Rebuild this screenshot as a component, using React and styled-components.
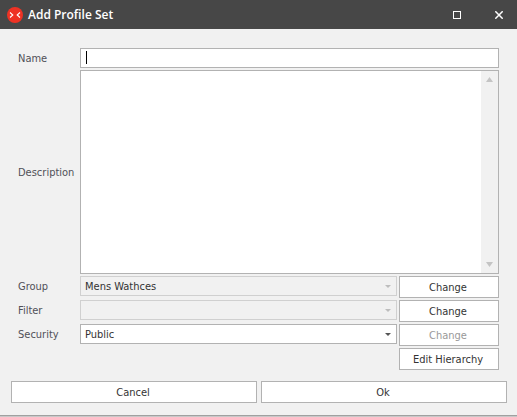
import React, { useState } from "react";
import styled, { createGlobalStyle } from "styled-components";

const GlobalStyle = createGlobalStyle`
  *, *::before, *::after { box-sizing: border-box; }
  body { margin: 0; background: #f1f1f1; }
  body, button, input, select, textarea {
    font-family: "DejaVu Sans Condensed", "DejaVu Sans", sans-serif;
    font-size: 11px;
    line-height: 16px;
    color: #333;
  }
`;

const Dialog = styled.form`
  display: flex;
  flex-direction: column;
  min-height: 100vh;
  background: #f1f1f1;
  border-bottom: 1px solid #c8c8c8;
  box-shadow: inset 0 -1px 0 #a0a0a0;
`;

const TitleBar = styled.header`
  display: flex;
  align-items: center;
  height: 29px;
  padding: 0 12px 0 7px;
  background: #474747;
  color: #fff;
`;

const Title = styled.h1`
  flex: 1;
  margin: 0 0 0 5px;
  font-family: "Open Sans", "Noto Sans", sans-serif;
  font-size: 12px;
  line-height: 16px;
  font-weight: 600;
`;

const WindowControls = styled.div`
  display: flex;
  gap: 30px;
`;

const WindowButton = styled.button`
  display: flex;
  align-items: center;
  justify-content: center;
  width: 12px;
  height: 16px;
  padding: 0;
  border: 0;
  background: none;
`;

const Fields = styled.div`
  flex: 1;
  display: grid;
  grid-template-columns: 60px minmax(0, 1fr) 100px;
  grid-template-rows: 20px minmax(80px, 1fr) repeat(4, 22px);
  gap: 2px;
  padding: 19px 18px 11px;
`;

const Label = styled.label`
  align-self: ${(p) => (p.$middle ? "center" : "start")};
  padding: 3px 0 1px;
  color: #505058;
`;

const NameField = styled.div`
  position: relative;
  grid-column: 2 / 4;
`;

const TextInput = styled.input`
  display: block;
  width: 100%;
  height: 20px;
  padding: 2px 4px 0;
  border: 1px solid #b2b2b2;
  border-radius: 0;
  background: #fff;
  outline: none;
  caret-color: transparent;
`;

const Caret = styled.span`
  position: absolute;
  top: 3px;
  left: 6px;
  width: 1px;
  height: 13px;
  background: #000;
  pointer-events: none;
`;

const DescriptionField = styled.div`
  grid-column: 2 / 4;
  display: flex;
  border: 1px solid #b2b2b2;
  background: #fff;
`;

const TextArea = styled.textarea`
  flex: 1;
  min-width: 0;
  padding: 2px 4px;
  border: 0;
  background: none;
  outline: none;
  resize: none;
  overflow: hidden;
`;

const ScrollTrack = styled.div`
  display: flex;
  flex-direction: column;
  justify-content: space-between;
  align-items: center;
  width: 17px;
  padding: 6px 0;
  background: #f1f1f1;
`;

const SelectField = styled.div`
  position: relative;
  color: ${(p) => (p.$disabled ? "#bdbdbd" : "#555")};
`;

const Select = styled.select`
  display: block;
  width: 100%;
  height: 20px;
  padding: 2px 20px 0 4px;
  appearance: none;
  border: 1px solid #b2b2b2;
  border-radius: 0;
  background: #fff;
  outline: none;
  &:disabled {
    border-color: #d0d0d0;
    background: #f1f1f1;
    color: #333;
    opacity: 1;
  }
`;

const DropArrow = styled.svg`
  position: absolute;
  top: 9px;
  right: 6px;
  pointer-events: none;
`;

const Button = styled.button`
  height: 22px;
  padding: 2px 2px 0 0;
  border: 1px solid #b2b2b2;
  border-radius: 0;
  background: #fff;
  &:disabled { color: #999; }
`;

const HierarchyButton = styled(Button)`
  grid-column: 3;
`;

const Footer = styled.footer`
  display: grid;
  grid-template-columns: 1fr 1fr;
  gap: 4px;
  padding: 0 10px 13px 11px;
`;

function Logo() {
  return (
    <svg width="16" height="16" viewBox="0 0 16 16" aria-hidden="true">
      <circle cx="8" cy="8" r="8" fill="#ee3224" />
      <path d="M3 5.5 L5.8 8 L3 10.5 M13 5.5 L10.2 8 L13 10.5" fill="none" stroke="#fff" strokeWidth="1.1" />
    </svg>
  );
}

function ScrollArrow({ down }) {
  return (
    <svg width="7" height="5" viewBox="0 0 7 5" aria-hidden="true">
      <path d={down ? "M0 0 H7 L3.5 5 Z" : "M0 5 H7 L3.5 0 Z"} fill="#c4c4c4" />
    </svg>
  );
}

function DropDown({ id, options, disabled }) {
  return (
    <SelectField $disabled={disabled}>
      <Select id={id} disabled={disabled}>
        {options.map((o) => (
          <option key={o}>{o}</option>
        ))}
      </Select>
      <DropArrow width="6" height="3" viewBox="0 0 6 3" aria-hidden="true">
        <path d="M0 0 H6 L3 3 Z" fill="currentColor" />
      </DropArrow>
    </SelectField>
  );
}

export default function App() {
  const [name, setName] = useState("");
  return (
    <>
      <GlobalStyle />
      <Dialog onSubmit={(e) => e.preventDefault()}>
        <TitleBar>
          <Logo />
          <Title>Add Profile Set</Title>
          <WindowControls>
            <WindowButton type="button" aria-label="Maximize">
              <svg width="8" height="8" viewBox="0 0 8 8">
                <rect x="0.5" y="0.5" width="7" height="7" fill="none" stroke="#fff" />
              </svg>
            </WindowButton>
            <WindowButton type="button" aria-label="Close">
              <svg width="8" height="8" viewBox="0 0 8 8">
                <path d="M0.3 0.3 L7.7 7.7 M7.7 0.3 L0.3 7.7" stroke="#fff" strokeWidth="1.5" />
              </svg>
            </WindowButton>
          </WindowControls>
        </TitleBar>
        <Fields>
          <Label htmlFor="name">Name</Label>
          <NameField>
            <TextInput id="name" value={name} onChange={(e) => setName(e.target.value)} />
            {name === "" && <Caret />}
          </NameField>
          <Label htmlFor="description" $middle>Description</Label>
          <DescriptionField>
            <TextArea id="description" />
            <ScrollTrack>
              <ScrollArrow />
              <ScrollArrow down />
            </ScrollTrack>
          </DescriptionField>
          <Label htmlFor="group">Group</Label>
          <DropDown id="group" options={["Mens Wathces"]} disabled />
          <Button type="button">Change</Button>
          <Label htmlFor="filter">Filter</Label>
          <DropDown id="filter" options={[""]} disabled />
          <Button type="button">Change</Button>
          <Label htmlFor="security">Security</Label>
          <DropDown id="security" options={["Public", "Private"]} />
          <Button type="button" disabled>Change</Button>
          <HierarchyButton type="button">Edit Hierarchy</HierarchyButton>
        </Fields>
        <Footer>
          <Button type="button">Cancel</Button>
          <Button type="submit">Ok</Button>
        </Footer>
      </Dialog>
    </>
  );
}
